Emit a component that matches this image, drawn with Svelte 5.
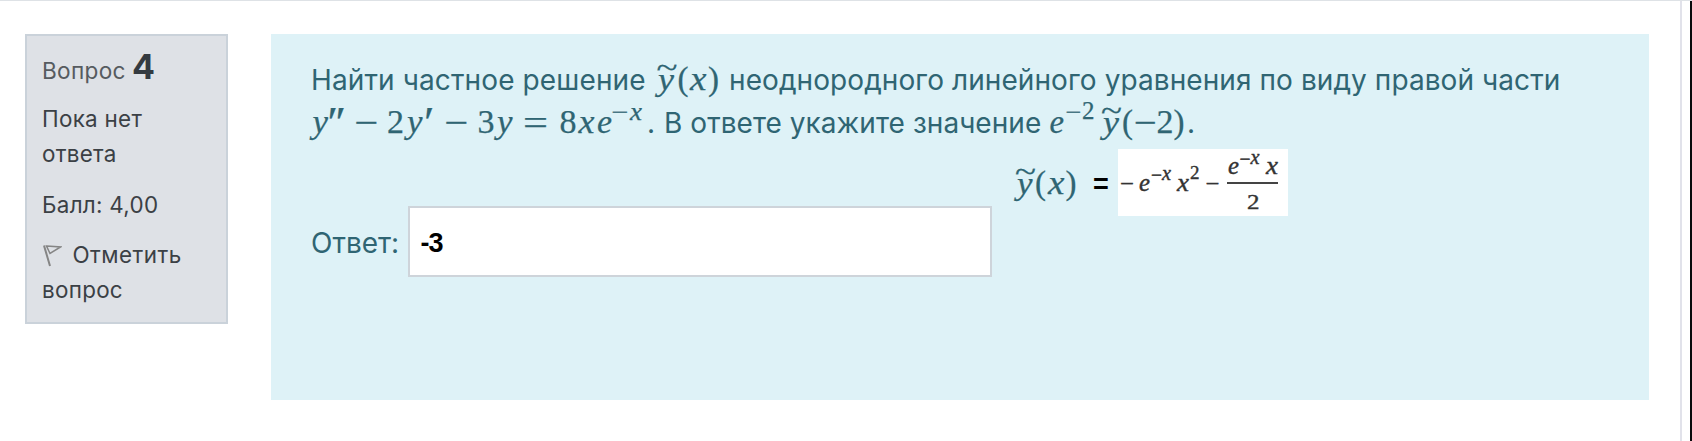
<script>
  // Each glyph: [text, x, baseline, size, advance width, upright]
  const solution = [
    ['y', 658, 89.7, 32, 16], ['~', 656.5, 77.5, 30, 21, true], ['(', 677.5, 89.7, 33, 11, true],
    ['x', 690, 89.7, 34, 16.5], [')', 708, 89.7, 33, 11, true]
  ];
  const equation = [
    ['y', 312.5, 132.7, 34, 15.5], ['′', 324.5, 137, 45, 10.5], ['′', 332.5, 137, 45, 10.5], ['−', 354, 133.5, 34, 24, true],
    ['2', 387, 132.7, 34, 17, true], ['y', 407, 132.7, 34, 15.5], ['′', 421, 137, 45, 10.5],
    ['−', 444, 133.5, 34, 24, true], ['3', 477.5, 132.7, 34, 17, true], ['y', 497, 132.7, 34, 15.5],
    ['=', 523, 134.5, 36, 25, true], ['8', 559.5, 132.7, 34, 17, true], ['x', 578.5, 132.7, 34, 16],
    ['e', 597, 132.7, 34, 15], ['−', 611.5, 119.5, 24, 17, true], ['x', 630, 119.7, 25, 12]
  ];
  const value = [
    ['e', 1049.5, 132.7, 34, 14.5], ['−', 1065.5, 119.5, 24, 16, true], ['2', 1082, 119.3, 25, 12.5, true],
    ['y', 1103, 132.7, 32, 16], ['~', 1101, 120.5, 30, 21, true], ['(', 1122, 132.7, 34, 11, true],
    ['−', 1133.5, 133.5, 34, 23, true], ['2', 1156.5, 132.7, 34, 17, true], [')', 1173.5, 132.7, 34, 11, true]
  ];
  const unknown = [
    ['y', 1017, 194, 32, 15.5], ['~', 1015, 181.8, 30, 21, true], ['(', 1035, 194, 34, 11, true],
    ['x', 1048, 194, 34, 16.5], [')', 1065.5, 194, 34, 11, true]
  ];
  const result = [
    ['−', 1120, 191, 22, 14, true], ['e', 1139, 191, 25, 11], ['−', 1151, 181, 18, 11, true],
    ['x', 1162, 180.3, 20, 9], ['x', 1177, 191, 26, 12], ['2', 1190, 179.3, 19, 9.5, true],
    ['−', 1205.5, 191, 22, 14, true], ['e', 1228, 174, 25, 11], ['−', 1239.5, 165, 18, 11, true],
    ['x', 1250.5, 164.3, 20, 9], ['x', 1266, 173.5, 26, 12], ['2', 1247, 209, 22, 12.5, true]
  ];
</script>

{#snippet math(glyphs, x, y, w, h)}
  <svg class="math" viewBox="{x} {y} {w} {h}" width={w} height={h}>
    {#each glyphs as [text, gx, gy, size, length, upright]}
      <text class:upright x={gx} y={gy} font-size={size} textLength={length} lengthAdjust="spacingAndGlyphs">{text}</text>
    {/each}
  </svg>
{/snippet}

<div class="page">
  <aside class="info">
    <h3><span class="label">Вопрос</span><b>4</b></h3>
    <p>Пока нет<br />ответа</p>
    <p>Балл: 4,00</p>
    <p class="flag">
      <svg width="20" height="24" viewBox="0 0 20 24">
        <path d="M2 1.5 L8 22" fill="none" stroke="#858585" stroke-width="2" />
        <path d="M4.5 2 L18.5 3 L8 9.5 Z" fill="none" stroke="#858585" stroke-width="1.5" />
      </svg><span class="mark">Отметить</span><br />вопрос
    </p>
  </aside>

  <main class="question">
    <div class="line">
      <span class="t1">Найти частное решение</span>
      {@render math(solution, 650, 58, 79, 43)}
      <span class="t2">неоднородного линейного уравнения по виду правой части</span>
    </div>
    <div class="line">
      {@render math(equation, 311, 101, 336, 43)}
      <span class="t3">.</span>
      <span class="t4">В ответе укажите значение</span>
      {@render math(value, 1046, 101, 141, 43)}
      <span class="t5">.</span>
    </div>
    <div class="work">
      <label class="answer"><span class="t6">Ответ:</span><span class="field"><span class="entry">-3</span></span></label>
      <div class="formula">
        {@render math(unknown, 1012, 149, 81, 67)}
        <b class="equals">=</b>
        <div class="result">
          {@render math(result, 1118, 149, 170, 67)}
          <i class="bar"></i>
        </div>
      </div>
    </div>
  </main>
</div>

<style>
  :global(body) { margin: 0; background: #fff; }
  .page {
    box-sizing: border-box;
    display: flex;
    align-items: flex-start;
    gap: 43px;
    width: 1692px;
    height: 441px;
    padding: 33px 0 0 25px;
    overflow: hidden;
    border-top: 1px solid #dee2e6;
    background: linear-gradient(90deg, transparent 1680px, #e1e2ea 1680px, #e1e2ea 1682px, transparent 1682px, transparent 1690px, #080a0c 1690px);
    font-family: Inter, sans-serif;
  }
  .info {
    box-sizing: border-box;
    flex: none;
    width: 203px;
    height: 290px;
    padding: 13px 15px;
    border: 2px solid #cad2da;
    background: #dee1e6;
    color: #3b4045;
    font-size: 22.4px;
    line-height: 35px;
    letter-spacing: .3px;
    white-space: nowrap;
  }
  h3 {
    display: flex;
    align-items: baseline;
    height: 36px;
    margin: 0 0 16px;
    font-size: 22.6px;
    font-weight: 400;
  }
  .label { width: 90px; color: #565b60; }
  h3 b { font-size: 34px; letter-spacing: 0; color: #343a40; }
  p { margin: 0 0 16px; }
  .flag { margin-top: -0.8px; }
  .mark { letter-spacing: .45px; }
  .flag svg { width: 20px; height: 24px; margin-right: 10.5px; vertical-align: -5px; }
  .question {
    box-sizing: border-box;
    flex: none;
    width: 1378px;
    height: 366px;
    padding: 24px 0 0 40px;
    background: #def2f7;
    color: #2f6573;
    font-size: 28px;
    white-space: nowrap;
  }
  .line { display: flex; height: 43px; line-height: 45px; letter-spacing: .08px; }
  .line span { flex: none; }
  .math {
    display: block;
    flex: none;
    overflow: visible;
    font-family: "Liberation Serif", serif;
    font-style: italic;
    letter-spacing: 0;
    fill: currentColor;
    stroke: currentColor;
    stroke-width: .25px;
  }
  .upright { font-style: normal; }
  .t1 { width: 339px; letter-spacing: .12px; }
  .t3 { width: 17px; }
  .t4 { width: 382px; letter-spacing: .05px; }
  .t5 { width: 10px; }
  .work { display: flex; align-items: flex-start; padding-top: 5px; }
  .answer { display: flex; margin-top: 57px; }
  .t6 { width: 96.5px; line-height: 74px; }
  .field {
    box-sizing: border-box;
    width: 584px;
    height: 71px;
    padding-left: 11px;
    border: 2px solid #ced4da;
    background: #fff;
    color: #000;
    font: bold 27px/71px "Liberation Sans", sans-serif;
  }
  .entry { letter-spacing: -.9px; }
  .formula { display: flex; margin-left: 20.5px; }
  .equals { width: 25px; color: #000; font: bold 27px/70px "Liberation Sans", sans-serif; }
  .result { position: relative; width: 170px; height: 67px; background: #fff; color: #333; }
  .result .math { stroke-width: .4px; }
  .bar { position: absolute; left: 109px; top: 33px; width: 51px; height: 1.5px; background: #444; }
</style>
